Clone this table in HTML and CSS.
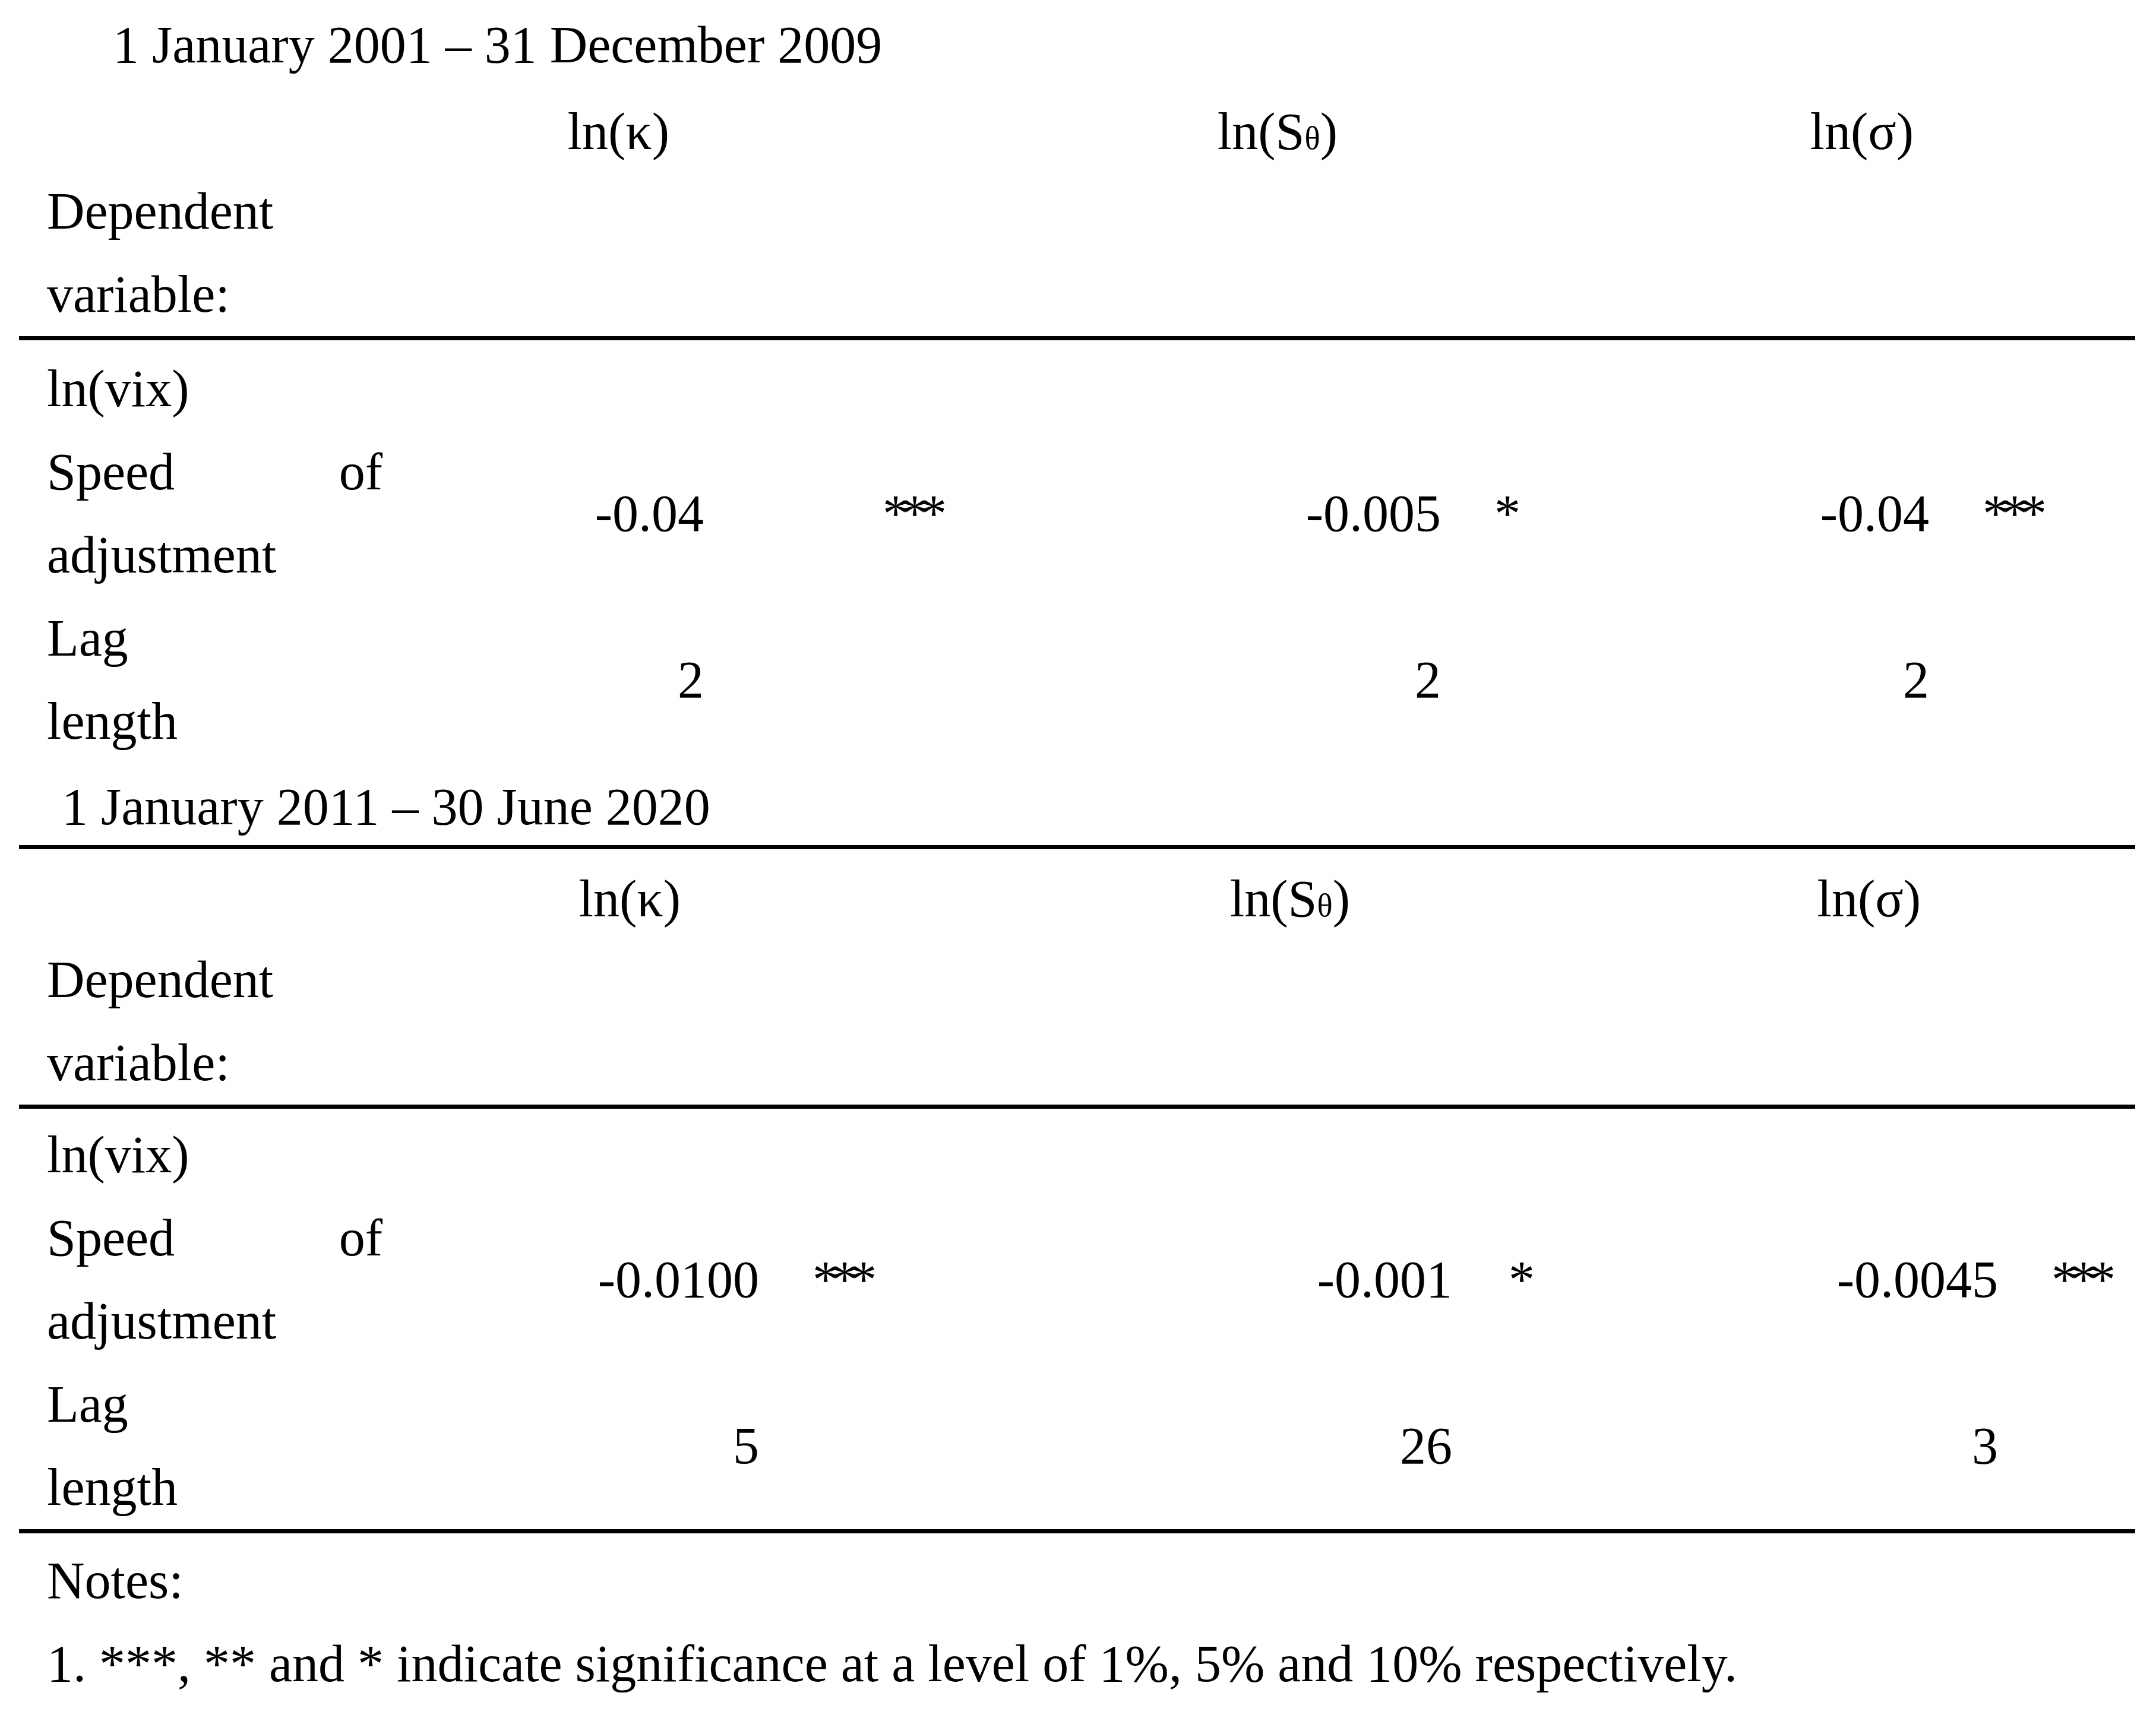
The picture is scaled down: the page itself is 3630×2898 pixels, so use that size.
FILE: index.html
```html
<!DOCTYPE html>
<html lang="en">
<head>
<meta charset="utf-8">
<title>Speed of adjustment</title>
<link rel="stylesheet" href="styles.css">
</head>
<body>
<div class="page">
  <div class="title title1">1 January 2001 – 31 December 2009</div>
  <div class="tbl t1">
    <div class="lbl hlbl">Dependent<br>variable:</div>
    <div class="hd c2 hd1">ln(κ)</div>
    <div class="hd c4 hd2">ln(S<span class="sub">θ</span>)</div>
    <div class="hd c6 hd3">ln(σ)</div>
    <div class="rule"></div>
    <div class="lbl vix">ln(vix)</div>
    <div class="lbl jus">Speed of<br>adjustment</div>
    <div class="val c2">-0.04</div>
    <div class="star c3 s1">***</div>
    <div class="val c4">-0.005</div>
    <div class="star c5 s2">*</div>
    <div class="val c6">-0.04</div>
    <div class="star c7 s3">***</div>
    <div class="lbl">Lag<br>length</div>
    <div class="val c2">2</div>
    <div class="val c4">2</div>
    <div class="val c6">2</div>
  </div>
  <div class="title title2">1 January 2011 – 30 June 2020</div>
  <div class="tbl t2">
    <div class="rule"></div>
    <div class="lbl hlbl">Dependent<br>variable:</div>
    <div class="hd c2 hd1">ln(κ)</div>
    <div class="hd c4 hd2">ln(S<span class="sub">θ</span>)</div>
    <div class="hd c6 hd3">ln(σ)</div>
    <div class="rule"></div>
    <div class="lbl vix">ln(vix)</div>
    <div class="lbl jus">Speed of<br>adjustment</div>
    <div class="val c2">-0.0100</div>
    <div class="star c3 s1">***</div>
    <div class="val c4">-0.001</div>
    <div class="star c5 s2">*</div>
    <div class="val c6">-0.0045</div>
    <div class="star c7 s3">***</div>
    <div class="lbl">Lag<br>length</div>
    <div class="val c2">5</div>
    <div class="val c4">26</div>
    <div class="val c6">3</div>
    <div class="rule"></div>
  </div>
  <div class="notes">
    <div>Notes:</div>
    <div>1. ***, ** and * indicate significance at a level of 1%, 5% and 10% respectively.</div>
  </div>
</div>
</body>
</html>
```
FILE: styles.css
```css
body {
  margin: 0;
  background: #ffffff;
  color: #000000;
  font-family: "Liberation Serif", "Times New Roman", serif;
  font-size: 88px;
  line-height: 140px;
}

.page {
  padding: 6px 0 0 32px;
  width: 3563px;
}

.title {
  white-space: nowrap;
}

.title1 {
  padding-left: 158px;
  height: 140px;
}

.title2 {
  padding-left: 72px;
  margin-top: 4px;
  height: 134px;
}

.tbl {
  display: grid;
}

.t1 {
  grid-template-columns: 618px 535px 515px 726px 274px 548px 347px;
}

.t2 {
  grid-template-columns: 618px 628px 522px 645px 255px 664px 231px;
}

.c2 { grid-column: 2; }
.c3 { grid-column: 3; }
.c4 { grid-column: 4; }
.c5 { grid-column: 5; }
.c6 { grid-column: 6; }
.c7 { grid-column: 7; }

.lbl {
  grid-column: 1;
  padding: 0 6px 0 47px;
}

.jus {
  text-align: justify;
  text-align-last: justify;
}

.hlbl {
  padding-top: 140px;
}

.t2 .hlbl {
  padding-top: 150px;
}

.hd {
  text-align: right;
  align-self: start;
  padding-top: 6px;
  white-space: nowrap;
}

.t2 .hd {
  padding-top: 14px;
}

.t1 .hd1 { padding-right: 58px; }
.t1 .hd2 { padding-right: 174px; }
.t1 .hd3 { padding-right: 26px; }
.t2 .hd1 { padding-right: 132px; }
.t2 .hd2 { padding-right: 172px; }
.t2 .hd3 { padding-right: 130px; }

.sub {
  font-size: 0.62em;
}

.val {
  text-align: right;
  align-self: center;
  white-space: nowrap;
}

.star {
  align-self: center;
  white-space: nowrap;
  letter-spacing: -12px;
}

.t1 .s1 { padding-left: 301px; }
.t1 .s2 { padding-left: 90px; }
.t1 .s3 { padding-left: 90px; }
.t2 .s1 { padding-left: 90px; }
.t2 .s2 { padding-left: 95px; }
.t2 .s3 { padding-left: 90px; }

.rule {
  grid-column: 1 / -1;
  height: 7px;
  background: #000000;
}

.vix {
  padding-top: 12px;
}

.t2 .vix {
  padding-top: 8px;
}

.notes {
  padding-left: 47px;
  margin-top: 10px;
  white-space: nowrap;
}
```
